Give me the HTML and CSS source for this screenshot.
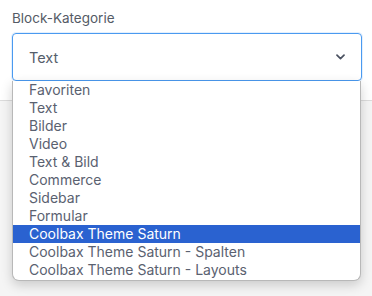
FILE: index.html
```html
<!DOCTYPE html>
<html lang="de">
<head>
    <meta charset="UTF-8">
    <meta name="viewport" content="width=device-width, initial-scale=1.0">
    <title>Block-Kategorie</title>
    <link rel="stylesheet" href="styles.css">
</head>
<body>

    <!-- Field -->
    <div class="field">
        <label class="field-label">Block-Kategorie</label>
        <div class="select-wrap">
            <div class="select-box">
                <span>Text</span>
                <svg class="chevron" width="9" height="6" viewBox="0 0 9 6">
                    <path d="M1 1.2l3.5 3.4 3.5-3.4" fill="none" stroke="#4a5160" stroke-width="1.7" stroke-linecap="round" stroke-linejoin="round"/>
                </svg>
            </div>

            <!-- Options list -->
            <ul class="options">
                <li>Favoriten</li>
                <li>Text</li>
                <li>Bilder</li>
                <li>Video</li>
                <li>Text &amp; Bild</li>
                <li>Commerce</li>
                <li>Sidebar</li>
                <li>Formular</li>
                <li class="active">Coolbax Theme Saturn</li>
                <li>Coolbax Theme Saturn - Spalten</li>
                <li>Coolbax Theme Saturn - Layouts</li>
            </ul>
        </div>
    </div>

    <div class="panel"></div>

</body>
</html>
```

FILE: styles.css
```css
body {
    font-family: Inter, "Noto Sans", sans-serif;
    margin: 0;
    background: #fff;
    height: 296px;
    overflow: hidden;
}
.field {
    padding: 9px 10px 0 12px;
    height: 100px;
    box-sizing: border-box;
}
.field-label {
    display: block;
    font-size: 13.5px;
    line-height: 18px;
    color: #555b66;
    margin-bottom: 6px;
}
.select-wrap {
    position: relative;
}
.select-box {
    display: flex;
    align-items: center;
    justify-content: space-between;
    height: 48px;
    box-sizing: border-box;
    padding: 0 16px 0 16px;
    border: 1px solid #4a9af0;
    border-radius: 4px;
    box-shadow: 0 0 0 1px rgba(74, 154, 240, 0.15);
    font-size: 14.5px;
    color: #555e6b;
}
.chevron {
    display: block;
}
.options {
    position: absolute;
    top: 48px;
    left: 0;
    right: 1px;
    z-index: 2;
    list-style: none;
    margin: 0;
    padding: 0 0 1px 0;
    background: #fff;
    border: 1px solid #b8b8b8;
    border-top: 0;
    border-radius: 0 0 7px 7px;
    box-shadow: 0 4px 12px rgba(0, 0, 0, 0.18);
    font-size: 14px;
}
.options li {
    height: 18px;
    line-height: 18px;
    padding-left: 16px;
    color: #5a6170;
    white-space: nowrap;
}
.options li.active {
    background: #2a62d0;
    color: #fff;
}
.panel {
    border-top: 1px solid #dcdcdc;
    background: #f5f5f5;
    height: 196px;
}
```
